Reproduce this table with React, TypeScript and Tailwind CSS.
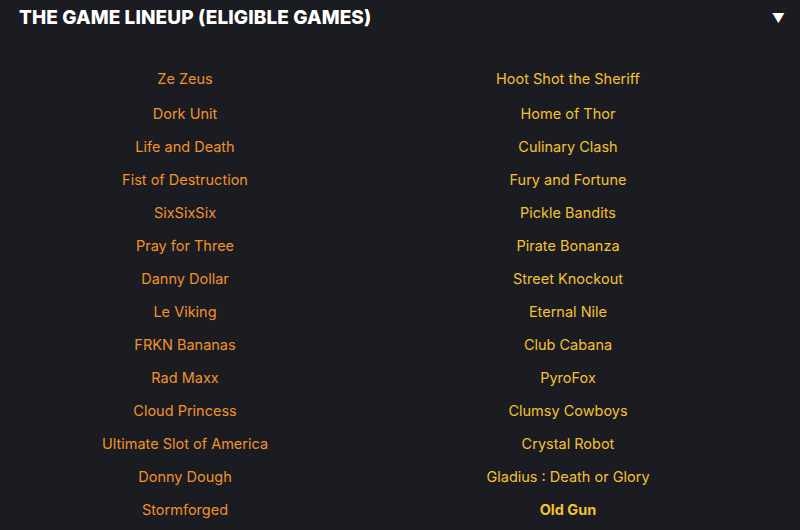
const left = [
  "Ze Zeus",
  "Dork Unit",
  "Life and Death",
  "Fist of Destruction",
  "SixSixSix",
  "Pray for Three",
  "Danny Dollar",
  "Le Viking",
  "FRKN Bananas",
  "Rad Maxx",
  "Cloud Princess",
  "Ultimate Slot of America",
  "Donny Dough",
  "Stormforged",
]

const right = [
  "Hoot Shot the Sheriff",
  "Home of Thor",
  "Culinary Clash",
  "Fury and Fortune",
  "Pickle Bandits",
  "Pirate Bonanza",
  "Street Knockout",
  "Eternal Nile",
  "Club Cabana",
  "PyroFox",
  "Clumsy Cowboys",
  "Crystal Robot",
  "Gladius : Death or Glory",
  "Old Gun",
]

export default function App() {
  return (
    <div className="h-[530px] w-[800px] overflow-hidden bg-[#1b1c21] font-['Inter',sans-serif]">
      {/* header */}
      <div className="flex h-[37px] items-center justify-between pl-[19px] pr-[15px]">
        <h2 className="text-[19px] font-extrabold tracking-[0.005em] text-white">
          THE GAME LINEUP (ELIGIBLE GAMES)
        </h2>
        <span className="text-[13px] text-white">▼</span>
      </div>

      {/* games */}
      <div className="mt-[32px] grid grid-cols-[370px_370px] gap-x-[13px]">
        <ul className="flex flex-col items-center">
          {left.map((g, i) => (
            <li
              key={g}
              className={`text-[14.5px] leading-[20px] text-[#f0922c] ${i === 0 ? "mb-[15px]" : "mb-[13px]"}`}
            >
              {g}
            </li>
          ))}
        </ul>
        <ul className="flex flex-col items-center">
          {right.map((g, i) => (
            <li
              key={g}
              className={`text-[14.5px] leading-[20px] text-[#f5c034] ${i === 0 ? "mb-[15px]" : "mb-[13px]"} ${g === "Old Gun" ? "font-bold" : ""}`}
            >
              {g}
            </li>
          ))}
        </ul>
      </div>
    </div>
  )
}
